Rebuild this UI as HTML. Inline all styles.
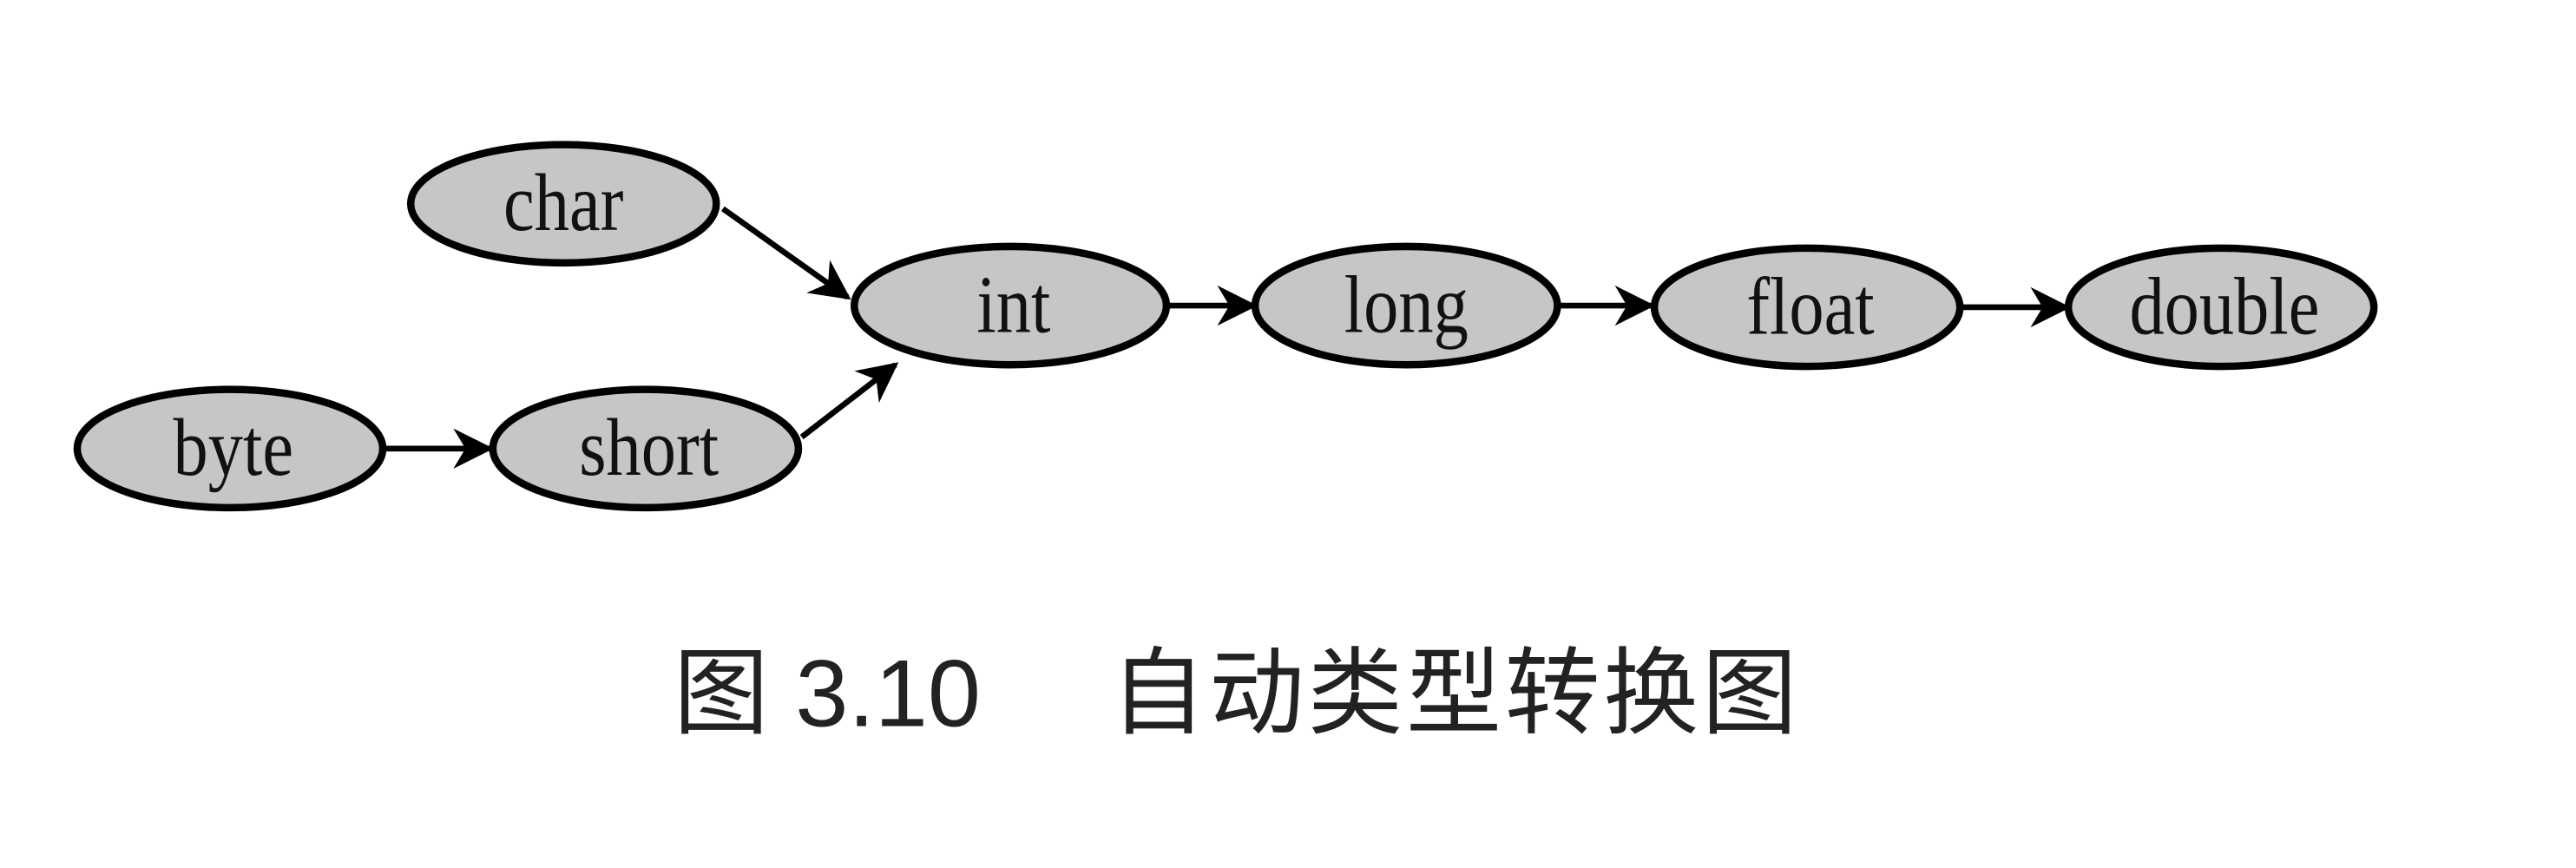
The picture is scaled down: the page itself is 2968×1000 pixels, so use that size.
<!DOCTYPE html>
<html><head><meta charset="utf-8"><style>
html,body{margin:0;padding:0;background:#fff;width:2968px;height:1000px;overflow:hidden}
svg{display:block}
</style></head><body>
<svg width="2968" height="1000" viewBox="0 0 1568 528.3" preserveAspectRatio="none" xmlns="http://www.w3.org/2000/svg">
<defs>
<marker id="a" viewBox="0 0 10 10" refX="9" refY="5" markerWidth="9" markerHeight="7" orient="auto" markerUnits="strokeWidth">
<path d="M0,0 L10,5 L0,10 L3,5 Z" fill="#000"/>
</marker>
</defs>
<g stroke="#000" stroke-width="3.5" fill="none" marker-end="url(#a)">
<line x1="440" y1="127" x2="516" y2="181"/>
<line x1="488" y1="266" x2="545" y2="222"/>
<line x1="233" y1="273" x2="298" y2="273"/>
<line x1="710" y1="186" x2="763" y2="186"/>
<line x1="949" y1="186" x2="1005" y2="186"/>
<line x1="1194" y1="187" x2="1258" y2="187"/>
</g>
<g fill="#c6c6c6" stroke="#000" stroke-width="4.5">
<ellipse cx="343" cy="124" rx="93" ry="36"/>
<ellipse cx="615" cy="186" rx="95" ry="36"/>
<ellipse cx="856" cy="186" rx="92" ry="36"/>
<ellipse cx="1100" cy="187" rx="93" ry="36"/>
<ellipse cx="1352" cy="187" rx="93" ry="36"/>
<ellipse cx="140" cy="273" rx="93" ry="36"/>
<ellipse cx="393" cy="273" rx="93" ry="36"/>
</g>
<g font-family="'Liberation Serif',serif" font-size="50" text-anchor="middle" fill="#111">
<text transform="translate(343,140) scale(0.85,1)">char</text>
<text transform="translate(617,202) scale(0.85,1)">int</text>
<text transform="translate(856,202) scale(0.85,1)">long</text>
<text transform="translate(1102,203) scale(0.85,1)">float</text>
<text transform="translate(1354,203) scale(0.85,1)">double</text>
<text transform="translate(142,289) scale(0.85,1)">byte</text>
<text transform="translate(395,289) scale(0.85,1)">short</text>
</g>
<text x="410" y="442" font-family="'Liberation Sans','Noto Sans CJK SC',sans-serif" font-size="58" fill="#222">图 3.10</text>
<text x="676" y="442" font-family="'Liberation Sans','Noto Sans CJK SC',sans-serif" font-size="58" fill="#222" letter-spacing="2">自动类型转换图</text>
</svg>
</body></html>
